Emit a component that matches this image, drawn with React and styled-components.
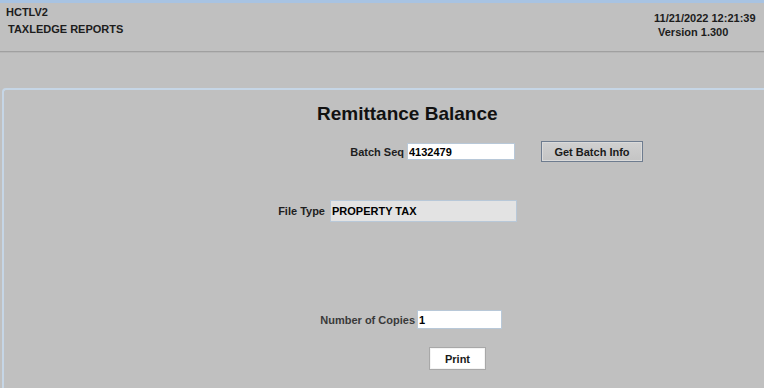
import React from "react";
import styled, { createGlobalStyle } from "styled-components";

const GlobalStyle = createGlobalStyle`
  html, body {
    margin: 0;
    padding: 0;
    background: #c0c0c0;
    overflow: hidden;
  }
  body {
    font-family: "Liberation Sans", Arial, sans-serif;
    font-size: 11px;
    font-weight: bold;
    color: #1c1c1c;
  }
`;

const Page = styled.div`
  width: 764px;
  height: 388px;
  overflow: hidden;
  background: #c0c0c0;
`;

const TopStrip = styled.div`
  height: 3px;
  background: #a8c3e2;
`;

const Header = styled.div`
  display: flex;
  justify-content: space-between;
  align-items: flex-start;
  height: 48px;
`;

const HeaderLeft = styled.div`
  padding: 2px 0 0 6px;
`;

const HeaderRight = styled.div`
  padding: 5px 12px 0 0;
  width: 98px;
`;

const Line = styled.div`
  line-height: 14px;
  white-space: pre;
  margin-top: ${(p) => p.$top || 0}px;
  margin-left: ${(p) => p.$indent || 0}px;
`;

const Divider = styled.div`
  border-top: 1px solid #a0a0a0;
  border-bottom: 1px solid #b6b6b6;
`;

const Panel = styled.div`
  margin: 35px 0 0 2px;
  height: 320px;
  border: 2px solid #c6d6e6;
  border-right: none;
  border-bottom: none;
  border-top-left-radius: 4px;
`;

const Title = styled.h1`
  margin: 13px 0 0 313px;
  font-size: 19px;
  line-height: 22px;
  font-weight: bold;
  color: #111;
`;

const Row = styled.div`
  display: flex;
  align-items: center;
  height: ${(p) => p.$height}px;
  margin-top: ${(p) => p.$top}px;
  margin-left: ${(p) => p.$indent}px;
`;

const Label = styled.label`
  width: 100px;
  padding-right: ${(p) => p.$gap || 3}px;
  box-sizing: border-box;
  text-align: right;
  line-height: 14px;
  color: ${(p) => p.$color || "#1e1e1e"};
`;

const Field = styled.input`
  box-sizing: border-box;
  width: ${(p) => p.$width}px;
  height: ${(p) => p.$height}px;
  padding: 0 0 0 1px;
  margin: 0;
  border: 1px solid #b8c8d8;
  background: ${(p) => (p.$disabled ? "#e3e3e3" : "#ffffff")};
  font-family: "Liberation Sans", Arial, sans-serif;
  font-size: 11px;
  font-weight: bold;
  color: #000;
  outline: none;
`;

const Button = styled.button`
  box-sizing: border-box;
  width: ${(p) => p.$width}px;
  height: ${(p) => p.$height}px;
  margin: 0 0 0 ${(p) => p.$left || 0}px;
  padding: 0;
  font-family: "Liberation Sans", Arial, sans-serif;
  font-size: 11px;
  font-weight: bold;
  color: #1a1a1a;
  cursor: pointer;
  border: 1px solid ${(p) => (p.$light ? "#a8a8a8" : "#6e7c8f")};
  background: ${(p) => (p.$light ? "#ffffff" : "linear-gradient(#d0d0d0, #c4c4c4)")};
  box-shadow: inset 0 0 0 1px ${(p) => (p.$light ? "#f4f4f4" : "#dadada")};
`;

export default function App() {
  return (
    <Page>
      <GlobalStyle />
      <TopStrip />
      <Header>
        <HeaderLeft>
          <Line>HCTLV2</Line>
          <Line $top={3} $indent={2}>TAXLEDGE REPORTS</Line>
        </HeaderLeft>
        <HeaderRight>
          <Line $top={3}>11/21/2022 12:21:39</Line>
          <Line $indent={4}>Version 1.300</Line>
        </HeaderRight>
      </Header>
      <Divider />
      <Panel>
        <Title>Remittance Balance</Title>
        <Row $height={21} $top={16} $indent={303}>
          <Label>Batch Seq</Label>
          <Field $width={108} $height={17} readOnly value="4132479" />
          <Button $width={102} $height={21} $left={26}>Get Batch Info</Button>
        </Row>
        <Row $height={22} $top={38} $indent={226}>
          <Label $gap={5}>File Type</Label>
          <Field $width={187} $height={22} $disabled readOnly value="PROPERTY TAX" />
        </Row>
        <Row $height={19} $top={88} $indent={313}>
          <Label $color="#3a3a3a" $gap={2}>Number of Copies</Label>
          <Field $width={85} $height={19} readOnly value="1" />
        </Row>
        <Row $height={23} $top={18} $indent={425}>
          <Button $width={57} $height={23} $light>Print</Button>
        </Row>
      </Panel>
    </Page>
  );
}
